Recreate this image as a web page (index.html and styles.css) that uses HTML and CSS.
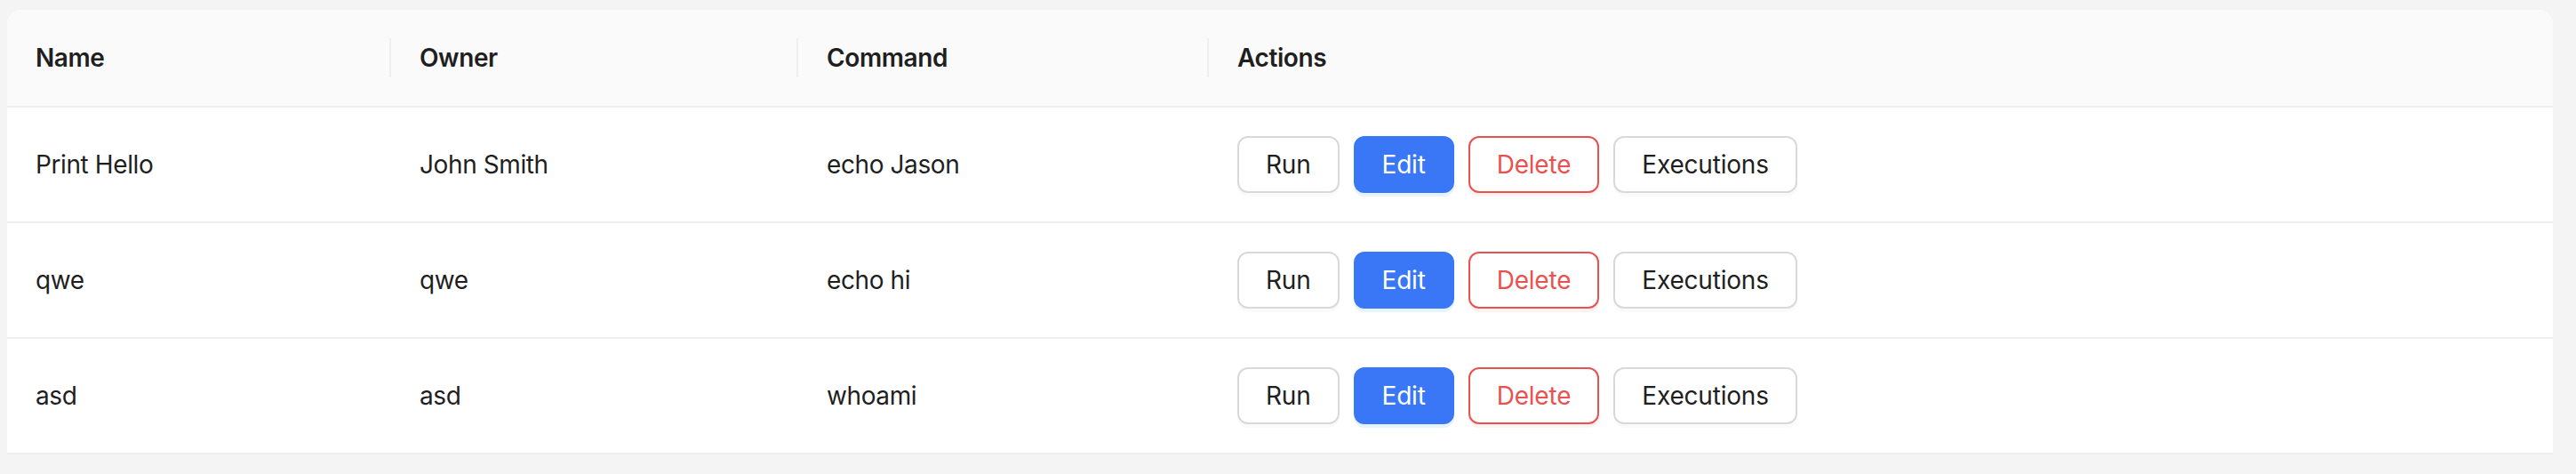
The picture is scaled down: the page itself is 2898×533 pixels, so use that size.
FILE: index.html
```html
<!DOCTYPE html>
<html lang="en">
<head>
<meta charset="utf-8">
<title>Commands</title>
<link rel="stylesheet" href="styles.css">
</head>
<body>
<div class="page">
  <div class="card">
    <table class="table">
      <colgroup>
        <col class="c-name">
        <col class="c-owner">
        <col class="c-command">
        <col>
      </colgroup>
      <thead>
        <tr>
          <th class="sep">Name</th>
          <th class="sep">Owner</th>
          <th class="sep">Command</th>
          <th>Actions</th>
        </tr>
      </thead>
      <tbody>
        <tr>
          <td>Print Hello</td>
          <td>John Smith</td>
          <td>echo Jason</td>
          <td><div class="actions"><button class="btn">Run</button><button class="btn primary">Edit</button><button class="btn danger">Delete</button><button class="btn">Executions</button></div></td>
        </tr>
        <tr>
          <td>qwe</td>
          <td>qwe</td>
          <td>echo hi</td>
          <td><div class="actions"><button class="btn">Run</button><button class="btn primary">Edit</button><button class="btn danger">Delete</button><button class="btn">Executions</button></div></td>
        </tr>
        <tr>
          <td>asd</td>
          <td>asd</td>
          <td>whoami</td>
          <td><div class="actions"><button class="btn">Run</button><button class="btn primary">Edit</button><button class="btn danger">Delete</button><button class="btn">Executions</button></div></td>
        </tr>
      </tbody>
    </table>
  </div>
</div>
</body>
</html>
```
FILE: styles.css
```css
* { box-sizing: border-box; }
html, body { margin: 0; padding: 0; background: #f4f4f4; }
body {
  font-family: Inter, "Noto Sans", "Liberation Sans", sans-serif;
  font-size: 28px;
  line-height: 44px;
  color: #1f1f1f;
  letter-spacing: -0.4px;
}
.page { padding: 11px 26px 0 8px; }
.card {
  background: #ffffff;
  border-radius: 16px 16px 0 0;
  overflow: hidden;
}
.table {
  width: 100%;
  border-collapse: separate;
  border-spacing: 0;
  table-layout: fixed;
}
.c-name { width: 432px; }
.c-owner { width: 458px; }
.c-command { width: 462px; }
th, td {
  text-align: left;
  padding: 32px;
  border-bottom: 2px solid #efefef;
  vertical-align: middle;
}
th {
  background: #fafafa;
  font-weight: 600;
  position: relative;
}
th.sep::after {
  content: "";
  position: absolute;
  right: 0;
  top: 32px;
  width: 2px;
  height: 44px;
  background: #efefef;
}
td { font-weight: 400; }
.actions { display: flex; gap: 16px; }
.btn {
  font-family: inherit;
  font-size: 28px;
  letter-spacing: -0.2px;
  line-height: 44px;
  height: 64px;
  padding: 0 30px;
  border: 2px solid #d9d9d9;
  border-radius: 12px;
  background: #ffffff;
  color: #1f1f1f;
  box-shadow: 0 4px 0 rgba(0, 0, 0, 0.02);
  cursor: pointer;
}
.btn.primary {
  background: #3a77f6;
  border-color: #3a77f6;
  color: #ffffff;
  box-shadow: 0 4px 0 rgba(5, 145, 255, 0.1);
}
.btn.danger {
  border-color: #e9524f;
  color: #e9524f;
  box-shadow: 0 4px 0 rgba(255, 38, 5, 0.06);
}
```
